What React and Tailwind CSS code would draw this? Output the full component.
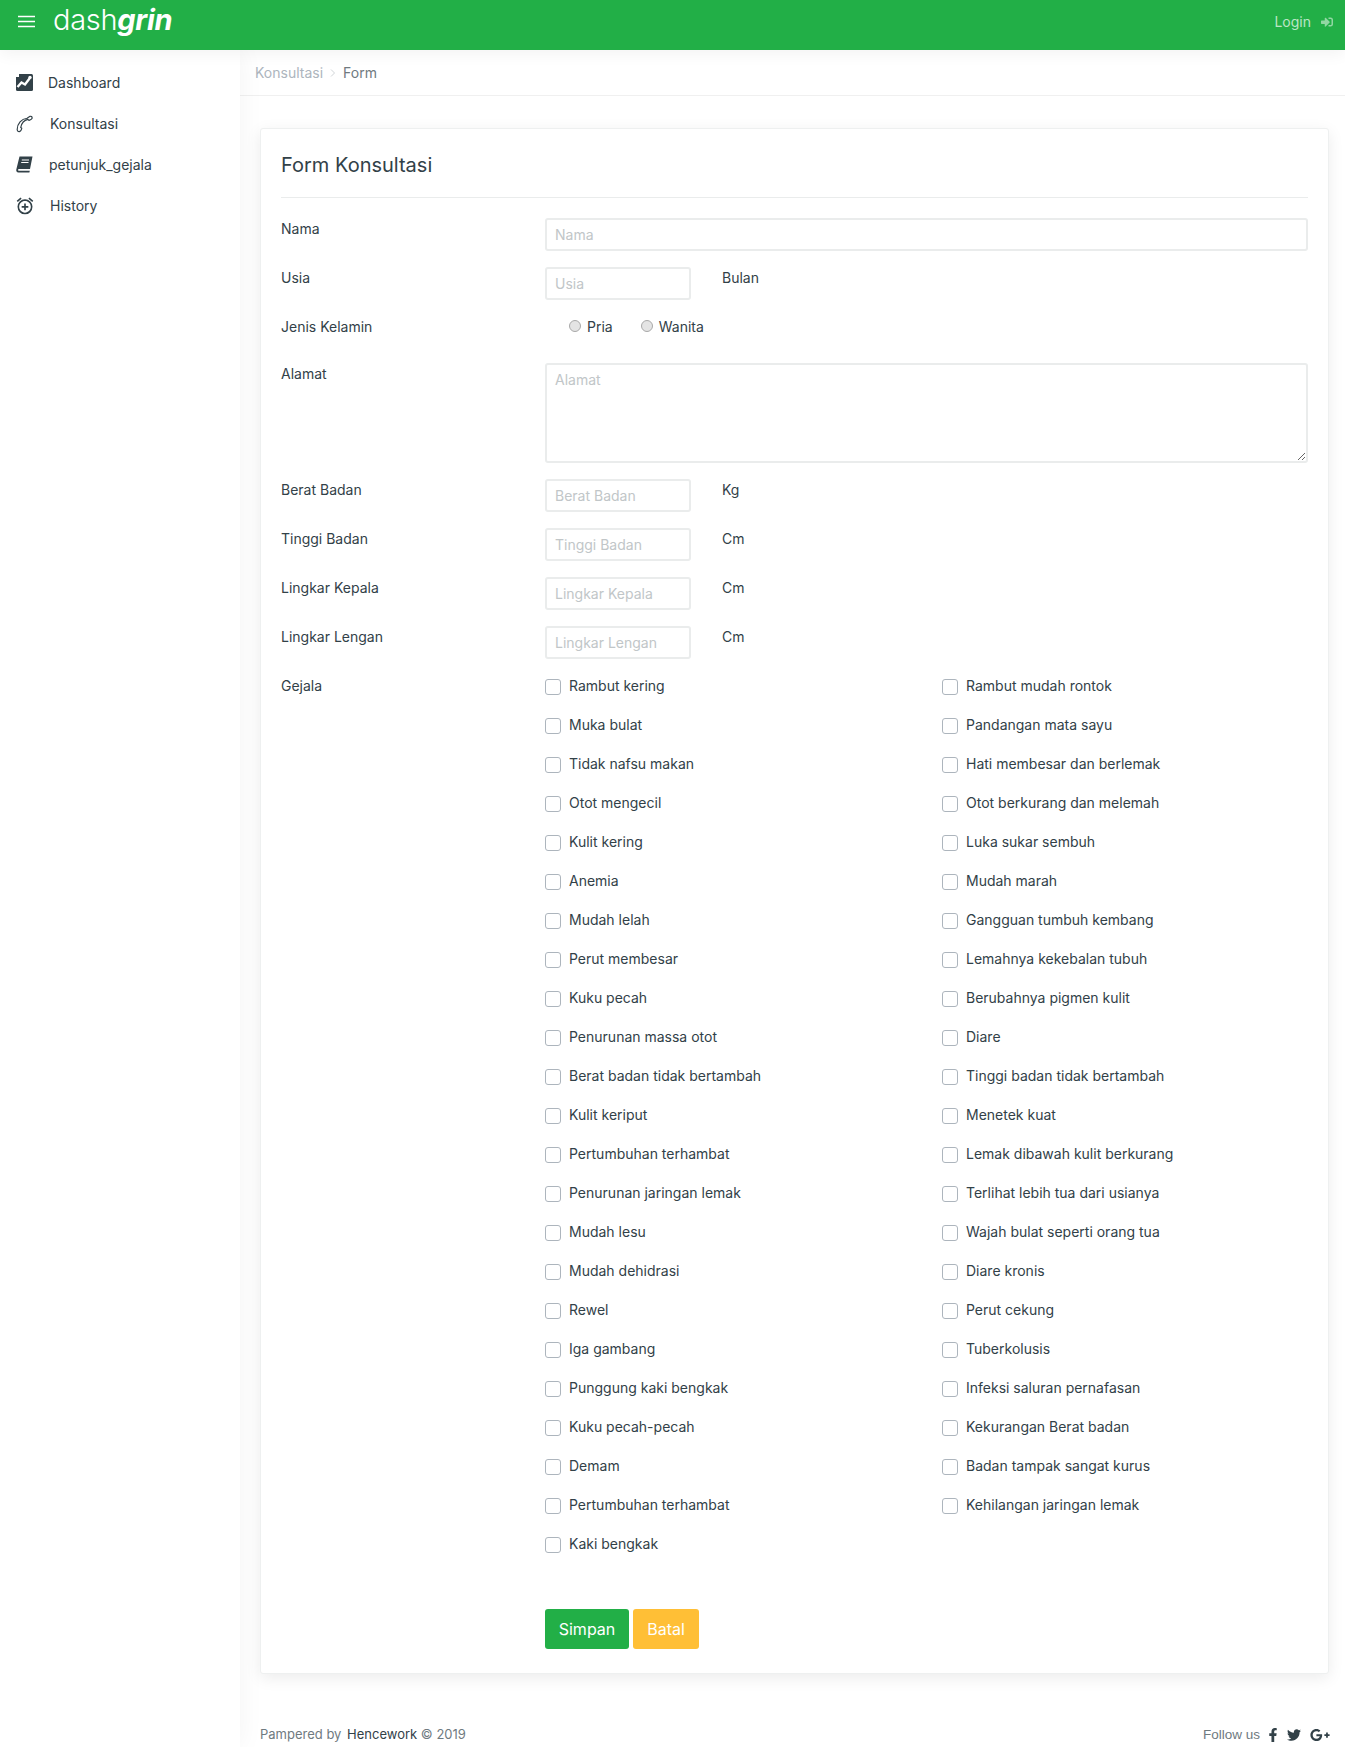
import { useState } from "react";
import { FaFacebookF, FaGooglePlusG, FaSignInAlt, FaTwitter } from "react-icons/fa";
import { MdOutlineAlarmAdd } from "react-icons/md";

const gejala = [
  ["Rambut kering", "Rambut mudah rontok"],
  ["Muka bulat", "Pandangan mata sayu"],
  ["Tidak nafsu makan", "Hati membesar dan berlemak"],
  ["Otot mengecil", "Otot berkurang dan melemah"],
  ["Kulit kering", "Luka sukar sembuh"],
  ["Anemia", "Mudah marah"],
  ["Mudah lelah", "Gangguan tumbuh kembang"],
  ["Perut membesar", "Lemahnya kekebalan tubuh"],
  ["Kuku pecah", "Berubahnya pigmen kulit"],
  ["Penurunan massa otot", "Diare"],
  ["Berat badan tidak bertambah", "Tinggi badan tidak bertambah"],
  ["Kulit keriput", "Menetek kuat"],
  ["Pertumbuhan terhambat", "Lemak dibawah kulit berkurang"],
  ["Penurunan jaringan lemak", "Terlihat lebih tua dari usianya"],
  ["Mudah lesu", "Wajah bulat seperti orang tua"],
  ["Mudah dehidrasi", "Diare kronis"],
  ["Rewel", "Perut cekung"],
  ["Iga gambang", "Tuberkolusis"],
  ["Punggung kaki bengkak", "Infeksi saluran pernafasan"],
  ["Kuku pecah-pecah", "Kekurangan Berat badan"],
  ["Demam", "Badan tampak sangat kurus"],
  ["Pertumbuhan terhambat", "Kehilangan jaringan lemak"],
  ["Kaki bengkak", null],
];

const ChartBoxIcon = () => (
  <svg width="17" height="17" viewBox="0 0 17 17">
    <rect x="0" y="0" width="17" height="17" rx="1.5" fill="#324148" />
    <path d="M0 0h3v3H0z" fill="#fff" />
    <path d="M1.5 13 L5.5 8.5 L9 10.5 L13.5 4.5" fill="none" stroke="#fff" strokeWidth="2.4" />
    <circle cx="14" cy="3.5" r="1.7" fill="#fff" />
  </svg>
);

const HandsetIcon = () => (
  <svg width="20" height="20" viewBox="0 0 20 20" fill="none" stroke="#324148" strokeWidth="1.4">
    <path d="M13 3.2 L16.5 1 C17.8 .5 19 1.5 19 3 C19 4.3 17 5.2 15.2 5.8 L14 4.6 C10 5.5 6.5 9.5 5.6 14 L6.8 15 C6.4 17 5.5 18.8 4 19 C2.4 19.2 1.4 18 1.4 16.5 C1.4 9.5 6.5 4 13 3.2Z" />
  </svg>
);

const BookIcon = () => (
  <svg width="17" height="17" viewBox="0 0 17 17">
    <path d="M3.5 0.5 H16.5 L14 13 H3 C1.8 13 1.5 14.8 3 14.8 H13.8 L13.4 16.5 H2.5 C0.6 16.5 0 15 0.3 13.5 Z" fill="#324148" />
    <path d="M5.8 4 H13 M5.2 6.5 H12.5" stroke="#fff" strokeWidth="1.1" />
  </svg>
);

const inputClass =
  "h-[33px] border-2 border-[#eaecec] rounded-[3px] px-[8px] text-[14px] text-[#324148] placeholder:text-[#c1c6c8] outline-none bg-white";

const Row = ({ label, unit, placeholder }) => (
  <div className="flex mb-4">
    <label className="w-[264px] shrink-0 text-[14px] leading-[21px] text-[#324148]">{label}</label>
    <input type="text" placeholder={placeholder} className={`${inputClass} w-[146px]`} />
    {unit && <span className="ml-[31px] text-[14px] leading-[21px] text-[#324148]">{unit}</span>}
  </div>
);

const Check = ({ label }) => (
  <label className="flex items-center h-[39px] w-[397px] shrink-0 text-[14px] text-[#324148]">
    <input
      type="checkbox"
      className="appearance-none w-4 h-4 border border-[#adb5bd] rounded-[3px] bg-white mr-2 checked:bg-[#22af47]"
    />
    <span className="-mt-[2px]">{label}</span>
  </label>
);

const NavItem = ({ icon, label, gap }) => (
  <a href="#" className="flex items-center h-[41px] pl-4 text-[14px] text-[#324148]">
    <span className="w-[17px] flex justify-center shrink-0">{icon}</span>
    <span className={gap}>{label}</span>
  </a>
);

export default function App() {
  const [gender, setGender] = useState("");

  return (
    <div className="min-h-[1747px] bg-white font-['Inter',sans-serif] text-[#324148] flex flex-col">
      <header className="h-[50px] bg-[#22af47] flex items-start justify-between pl-[18px] pr-[12px] relative z-20 shadow-[0_4px_16px_rgba(0,0,0,0.05)]">
        <div className="flex items-start">
          <svg width="17" height="13" viewBox="0 0 17 13" className="mt-[15px] mr-[18px]">
            <path d="M0 1.5h17M0 6.5h17M0 11.5h17" stroke="#fff" strokeWidth="1.6" />
          </svg>
          <span className="text-[29px] leading-none text-white font-light mt-[5px] tracking-[-0.3px]">
            dash<span className="font-bold italic">grin</span>
          </span>
        </div>
        <a href="#" className="flex items-center text-[14px] text-white/70 mt-[11px]">
          Login
          <FaSignInAlt className="ml-[10px] text-[12px] text-white/50" />
        </a>
      </header>

      <div className="flex flex-1">
        <aside className="w-[240px] shrink-0 bg-white shadow-[0_0_25px_rgba(0,0,0,0.05)] pt-[12px] relative z-10">
          <NavItem icon={<ChartBoxIcon />} label="Dashboard" gap="ml-[15px]" />
          <NavItem icon={<HandsetIcon />} label="Konsultasi" gap="ml-[17px]" />
          <NavItem icon={<BookIcon />} label="petunjuk_gejala" gap="ml-4" />
          <NavItem icon={<MdOutlineAlarmAdd className="text-[20px] shrink-0" />} label="History" gap="ml-[17px]" />
        </aside>

        <main className="flex-1 flex flex-col min-w-0">
          <nav className="h-[46px] border-b border-[#f0f0f0] flex items-center pl-[15px] text-[14px] shrink-0">
            <span className="text-[#adb5bd]">Konsultasi</span>
            <svg width="6" height="8" viewBox="0 0 6 8" className="mx-[7px]">
              <path d="M1 0.5 L4.5 4 L1 7.5" fill="none" stroke="#d0d4d7" strokeWidth="1" />
            </svg>
            <span className="text-[#6f7a7f]">Form</span>
          </nav>

          <div className="px-5 pt-[32px]">
            <section className="w-[1069px] h-[1546px] bg-white rounded-[3px] border border-[#eef0f0] shadow-[0_4px_16px_rgba(0,0,0,0.08)] px-5 pt-[21px]">
              <h5 className="text-[20px] leading-[30px] font-normal text-[#324148]">Form Konsultasi</h5>
              <hr className="border-[#eaecec] mt-[17px] mb-[20px]" />

              <form>
                <div className="flex mb-4">
                  <label className="w-[264px] shrink-0 text-[14px] leading-[21px]">Nama</label>
                  <input type="text" placeholder="Nama" className={`${inputClass} w-[763px]`} />
                </div>
                <Row label="Usia" placeholder="Usia" unit="Bulan" />

                <div className="flex mb-[25px] h-[22px] items-center text-[14px]">
                  <span className="w-[264px] shrink-0 -mt-[1px]">Jenis Kelamin</span>
                  <label className="flex items-center ml-6 -mt-[1px]">
                    <input
                      type="radio"
                      name="jk"
                      checked={gender === "pria"}
                      onChange={() => setGender("pria")}
                      className="appearance-none w-3 h-3 rounded-full border border-[#a9a9a9] bg-[#e4e4e4] mr-[6px] -mt-[1px]"
                    />
                    Pria
                  </label>
                  <label className="flex items-center ml-[28px] -mt-[1px]">
                    <input
                      type="radio"
                      name="jk"
                      checked={gender === "wanita"}
                      onChange={() => setGender("wanita")}
                      className="appearance-none w-3 h-3 rounded-full border border-[#a9a9a9] bg-[#e4e4e4] mr-[6px] -mt-[1px]"
                    />
                    Wanita
                  </label>
                </div>

                <div className="flex mb-4">
                  <label className="w-[264px] shrink-0 text-[14px] leading-[21px]">Alamat</label>
                  <textarea
                    placeholder="Alamat"
                    className="w-[763px] h-[100px] border-2 border-[#eaecec] rounded-[3px] px-[8px] py-[4px] text-[14px] placeholder:text-[#c1c6c8] outline-none"
                  />
                </div>

                <Row label="Berat Badan" placeholder="Berat Badan" unit="Kg" />
                <Row label="Tinggi Badan" placeholder="Tinggi Badan" unit="Cm" />
                <Row label="Lingkar Kepala" placeholder="Lingkar Kepala" unit="Cm" />
                <Row label="Lingkar Lengan" placeholder="Lingkar Lengan" unit="Cm" />

                <div className="flex">
                  <span className="w-[264px] shrink-0 text-[14px] leading-[21px]">Gejala</span>
                  <div className="-mt-[8px]">
                    {gejala.map(([kiri, kanan], i) => (
                      <div key={i} className="flex">
                        <Check label={kiri} />
                        {kanan && <Check label={kanan} />}
                      </div>
                    ))}
                  </div>
                </div>

                <div className="flex gap-1 ml-[264px] mt-[45px]">
                  <button type="button" className="w-[84px] h-10 bg-[#22af47] rounded-[3px] text-white text-[16px]">
                    Simpan
                  </button>
                  <button type="button" className="w-[66px] h-10 bg-[#ffbf36] rounded-[3px] text-white text-[16px]">
                    Batal
                  </button>
                </div>
              </form>
            </section>
          </div>

          <footer className="flex justify-between items-center mt-auto h-[24px] pl-5 pr-[15px] text-[13px]">
            <span className="text-[#6f7a7f]">
              Pampered by <a href="#" className="ml-[2px] text-[#324148]">Hencework</a> © 2019
            </span>
            <span className="flex items-center text-[#6f7a7f]">
              <span className="font-['Liberation_Sans',sans-serif] text-[13.5px]">Follow us</span>
              <FaFacebookF className="ml-[6px] text-[14px] text-[#324148]" />
              <FaTwitter className="ml-[7px] text-[14px] text-[#324148]" />
              <FaGooglePlusG className="ml-[9px] text-[20px] text-[#324148]" />
            </span>
          </footer>
        </main>
      </div>
    </div>
  );
}
